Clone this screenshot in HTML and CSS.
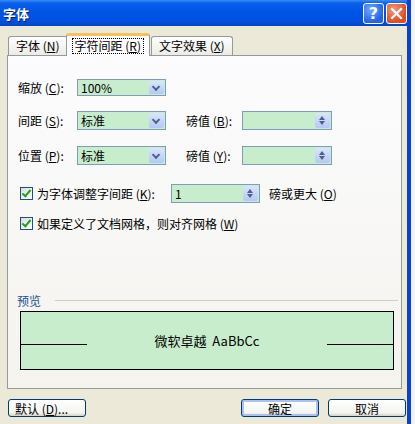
FILE: index.html
```html
<!DOCTYPE html>
<html lang="zh-CN">
<head>
    <meta charset="UTF-8">
    <meta name="viewport" content="width=device-width, initial-scale=1.0">
    <title>字体</title>
    <link rel="stylesheet" href="styles.css">
</head>
<body>
    <div class="window">
        <div class="titlebar">
            <span class="title">字体</span>
            <div class="title-buttons">
                <span class="tb-btn help">?</span>
                <span class="tb-btn close">
                    <svg width="13" height="13" viewBox="0 0 13 13"><path d="M2 2 L11 11 M11 2 L2 11" stroke="#fff" stroke-width="2.2" stroke-linecap="square"/></svg>
                </span>
            </div>
        </div>

        <div class="client">
            <div class="tabs">
                <div class="tab">字体 (<u>N</u>)</div>
                <div class="tab active"><span class="focus">字符间距 (<u>R</u>)</span></div>
                <div class="tab">文字效果 (<u>X</u>)</div>
            </div>

            <div class="panel">
                <div class="row row-1">
                    <label class="lbl">缩放 (<u>C</u>):</label>
                    <div class="combo short"><span class="val">100%</span><span class="drop"></span></div>
                </div>
                <div class="row row-2">
                    <label class="lbl">间距 (<u>S</u>):</label>
                    <div class="combo"><span class="val">标准</span><span class="drop"></span></div>
                    <label class="lbl2">磅值 (<u>B</u>):</label>
                    <div class="spin"><span class="val"></span><span class="spin-btn"></span></div>
                </div>
                <div class="row row-3">
                    <label class="lbl">位置 (<u>P</u>):</label>
                    <div class="combo"><span class="val">标准</span><span class="drop"></span></div>
                    <label class="lbl2">磅值 (<u>Y</u>):</label>
                    <div class="spin"><span class="val"></span><span class="spin-btn"></span></div>
                </div>
                <div class="row row-4">
                    <span class="check"></span>
                    <label class="check-lbl">为字体调整字间距 (<u>K</u>):</label>
                    <div class="spin kern"><span class="val">1</span><span class="spin-btn"></span></div>
                    <label class="after">磅或更大 (<u>O</u>)</label>
                </div>
                <div class="row row-5">
                    <span class="check"></span>
                    <label class="check-lbl">如果定义了文档网格，则对齐网格 (<u>W</u>)</label>
                </div>

                <div class="preview-head">
                    <span class="preview-title">预览</span>
                    <span class="preview-rule"></span>
                </div>
                <div class="preview">
                    <span class="baseline"></span>
                    <span class="sample">微软卓越&nbsp;&nbsp;AaBbCc</span>
                    <span class="baseline"></span>
                </div>
            </div>

            <div class="buttons">
                <button class="btn">默认 (<u>D</u>)...</button>
                <span class="spacer"></span>
                <button class="btn default">确定</button>
                <button class="btn">取消</button>
            </div>
        </div>
    </div>
</body>
</html>
```

FILE: styles.css
```css
* {
    box-sizing: border-box;
}
html, body {
    margin: 0;
    padding: 0;
    background: #f2f2f0;
}
body {
    font-family: "Noto Sans CJK SC", "DejaVu Sans", sans-serif;
    font-size: 12px;
    color: #000;
    width: 415px;
    height: 424px;
    overflow: hidden;
}
u {
    text-decoration: underline;
    text-underline-offset: 1px;
}
.window {
    width: 411px;
    height: 424px;
    border-right: 4px solid #0842d6;
    background: #ece9d8;
    display: flex;
    flex-direction: column;
}
.titlebar {
    height: 26px;
    flex: none;
    background: linear-gradient(#3b8cf7 0%, #0a5fec 12%, #0055e5 45%, #0052e0 80%, #0046c8 100%);
    display: flex;
    align-items: center;
    padding: 0 0 0 3px;
}
.title {
    color: #fff;
    font-weight: bold;
    font-size: 13px;
    text-shadow: 1px 1px 0 #0a1f6e;
    letter-spacing: 0;
}
.title-buttons {
    margin-left: auto;
    display: flex;
    gap: 2px;
    padding-right: 0;
}
.tb-btn {
    width: 21px;
    height: 21px;
    border: 1px solid #fff;
    border-radius: 3px;
    display: flex;
    align-items: center;
    justify-content: center;
    color: #fff;
    font: bold 16px "DejaVu Sans", sans-serif;
}
.help {
    background: radial-gradient(circle at 35% 30%, #6ea7ff, #2463e6 70%);
}
.close {
    background: radial-gradient(circle at 35% 30%, #f09a7a, #dc4d22 70%);
}

.client {
    flex: 1;
    padding: 7px 0 0 7px;
    display: flex;
    flex-direction: column;
}
.tabs {
    display: flex;
    align-items: flex-end;
    height: 22px;
    padding-left: 1px;
    position: relative;
    z-index: 1;
}
.tab {
    height: 19px;
    padding: 0 7px;
    border: 1px solid #919b9c;
    border-bottom: none;
    border-radius: 3px 3px 0 0;
    background: linear-gradient(#fefefe, #ecebe6);
    display: flex;
    align-items: center;
    margin-right: -1px;
    line-height: 1;
}
.tab.active {
    height: 22px;
    padding: 0 5px;
    background: #fcfcfe;
    border-top: 3px solid #f5c25a;
    margin: 0 1px 0 -1px;
    margin-bottom: -1px;
    height: 23px;
    position: relative;
}
.focus {
    border: 1px dotted #000;
    padding: 1px 2px;
}

.panel {
    width: 395px;
    height: 334px;
    flex: none;
    border: 1px solid #919b9c;
    background: linear-gradient(#fcfcfe, #f4f3ee);
    padding: 23px 0 0 10px;
}
.row {
    display: flex;
    align-items: center;
}
.row-1 { height: 17px; }
.row-2 { height: 19px; margin-top: 15px; }
.row-3 { height: 19px; margin-top: 16px; }
.row-4 { height: 19px; margin-top: 19px; padding-left: 2px; }
.row-5 { height: 16px; margin-top: 12px; padding-left: 2px; }

.lbl {
    width: 59px;
}
.lbl2 {
    width: 56px;
    margin-left: 20px;
}
.combo, .spin {
    display: flex;
    height: 100%;
    width: 89px;
    border: 1px solid #7f9db9;
    background: #c7edcc;
}
.combo .val, .spin .val {
    flex: 1;
    padding-left: 3px;
    display: flex;
    align-items: center;
}
.drop {
    width: 15px;
    margin: 1px;
    border-radius: 2px;
    background: linear-gradient(#d9e5fd, #b4c8f6) center / 100% 100%;
    position: relative;
}
.drop::after {
    content: "";
    position: absolute;
    left: 4px;
    top: 50%;
    width: 4px;
    height: 4px;
    border-right: 2px solid #4d6185;
    border-bottom: 2px solid #4d6185;
    transform: translateY(-70%) rotate(45deg);
}
.spin {
    width: 90px;
}
.spin-btn {
    width: 15px;
    margin: 1px;
    border-radius: 2px;
    background: linear-gradient(#d9e5fd, #b4c8f6);
    position: relative;
}
.spin-btn::before, .spin-btn::after {
    content: "";
    position: absolute;
    left: 4px;
    border-left: 3.5px solid transparent;
    border-right: 3.5px solid transparent;
}
.spin-btn::before {
    top: 3px;
    border-bottom: 4px solid #4d6185;
}
.spin-btn::after {
    bottom: 3px;
    border-top: 4px solid #4d6185;
}
.check {
    width: 13px;
    height: 13px;
    border: 1px solid #1c5180;
    background: linear-gradient(135deg, #dcdcd7, #fff);
    position: relative;
    margin-right: 4px;
    flex: none;
}
.check::after {
    content: "";
    position: absolute;
    left: 3px;
    top: 0px;
    width: 3px;
    height: 7px;
    border-right: 2px solid #21a121;
    border-bottom: 2px solid #21a121;
    transform: rotate(40deg);
}
.row-4 .check-lbl {
    width: 134px;
}
.spin.kern {
    width: 89px;
}
.after {
    margin-left: 9px;
}

.preview-head {
    display: flex;
    align-items: center;
    margin-top: 62px;
    margin-left: -1px;
    height: 14px;
}
.preview-title {
    color: #1f4f8f;
}
.preview-rule {
    flex: 1;
    height: 1px;
    margin: 0 3px 0 14px;
    background: #d0d0bf;
}
.preview {
    margin: 4px 0 0 2px;
    width: 374px;
    height: 59px;
    border: 1px solid #000;
    background: #c7edcc;
    display: flex;
    align-items: center;
    justify-content: space-between;
}
.baseline {
    width: 66px;
    height: 1px;
    background: #000;
    margin-top: 8px;
}
.sample {
    font-size: 13px;
    font-family: "Noto Sans CJK SC", "DejaVu Sans", sans-serif;
}

.buttons {
    display: flex;
    align-items: center;
    margin-top: 10px;
    padding-right: 1px;
    gap: 9px;
    margin-left: 1px;
}
.spacer {
    flex: 1;
}
.btn {
    width: 78px;
    height: 18px;
    padding: 0;
    font: 12px "Noto Sans CJK SC", sans-serif;
    color: #000;
    border: 1px solid #003c74;
    border-radius: 3px;
    background: linear-gradient(#ffffff, #f4f4f0 80%, #d6d0c5);
    display: flex;
    align-items: center;
    justify-content: center;
}
.btn:first-child {
    justify-content: flex-start;
    padding-left: 6px;
}
.btn.default {
    box-shadow: inset 0 0 0 2px #a8c3ef;
}
```
